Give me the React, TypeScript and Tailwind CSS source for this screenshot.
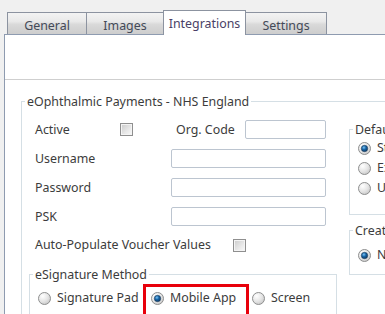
import React from "react";

function Radio({ checked = false }: { checked?: boolean }) {
  return (
    <svg width="13" height="13" viewBox="0 0 13 13" className="shrink-0">
      <defs>
        <radialGradient id="rgOuter" cx="35%" cy="30%" r="75%">
          <stop offset="0%" stopColor="#ffffff" />
          <stop offset="60%" stopColor="#e4e4e4" />
          <stop offset="100%" stopColor="#c8c8c8" />
        </radialGradient>
        <radialGradient id="rgDot" cx="40%" cy="35%" r="70%">
          <stop offset="0%" stopColor="#7cc4f5" />
          <stop offset="45%" stopColor="#1766a8" />
          <stop offset="100%" stopColor="#0a3560" />
        </radialGradient>
      </defs>
      <circle cx="6.5" cy="6.5" r="6" fill="url(#rgOuter)" stroke="#8e8f8f" strokeWidth="1" />
      {checked && <circle cx="6.5" cy="6.5" r="3.2" fill="url(#rgDot)" stroke="#233f5c" strokeWidth="0.6" />}
    </svg>
  );
}

function Checkbox() {
  return (
    <div className="w-[13px] h-[13px] border border-[#8f8f8f] bg-[#f4f4f4] p-[1px] shrink-0">
      <div className="w-full h-full bg-[linear-gradient(135deg,#cfcfcf,#e8e8e8_60%,#f6f6f6)]" />
    </div>
  );
}

function Input({ w }: { w: string }) {
  return <div className={`${w} h-[19px] border border-[#bcc5d0] rounded-[2px] bg-white shrink-0`} />;
}

function Tab({ label, w, selected = false, first = false }: { label: string; w: string; selected?: boolean; first?: boolean }) {
  if (selected) {
    return (
      <div className={`${w} h-[25px] -ml-px relative z-20 bg-white border-l border-t border-r border-[#8c93a0] flex items-start justify-center pt-[5px] text-[#4a3f66] leading-[16px]`}>
        {label}
      </div>
    );
  }
  return (
    <div
      className={`${w} h-[22px] mb-px ${first ? "" : "-ml-px"} relative z-10 border-l border-t border-r border-[#8c93a0] bg-[linear-gradient(#f3f3f3,#e9e9e9_40%,#d9d9d9_55%,#cdcdcd)] flex items-start justify-center pt-[5px] text-[#444a58] leading-[16px]`}
    >
      {label}
    </div>
  );
}

export default function App() {
  return (
    <div className="w-[385px] h-[314px] overflow-hidden bg-[#f0f0f0] font-['Noto_Sans',sans-serif] text-[12.4px] text-[#3c3c3c]">
      {/* Tabs */}
      <div className="flex items-end h-[25px] mt-[10px] ml-[7px] -mb-px relative z-10">
        <Tab label="General" w="w-[80px]" first />
        <Tab label="Images" w="w-[78px]" />
        <Tab label="Integrations" w="w-[83px]" selected />
        <Tab label="Settings" w="w-[82px]" />
      </div>

      {/* Panel */}
      <div className="ml-[4px] h-[300px] border-l border-t border-[#8e9bb0] bg-white">
        <div className="h-[45px] border-b border-[#cfcfcf]" />

        <fieldset className="mt-[13px] ml-[16px] w-[420px] border border-[#d5dfe5]">
          <legend className="ml-[3px] px-[2px] leading-[17px]">eOphthalmic Payments - NHS England</legend>

          <div className="flex pt-[5px]">
            {/* Left column */}
            <div className="w-[315px] shrink-0">
              <div className="flex items-center h-[29px] pl-[13px]">
                <span className="w-[85px] shrink-0 pt-[2px]">Active</span>
                <Checkbox />
                <span className="ml-[43px] w-[69px] shrink-0 pt-[2px]">Org. Code</span>
                <Input w="w-[81px]" />
              </div>
              <div className="flex items-center h-[29px] pl-[13px]">
                <span className="w-[136px] shrink-0 pt-[2px]">Username</span>
                <Input w="w-[155px]" />
              </div>
              <div className="flex items-center h-[29px] pl-[13px]">
                <span className="w-[136px] shrink-0 pt-[2px]">Password</span>
                <Input w="w-[155px]" />
              </div>
              <div className="flex items-center h-[29px] pl-[13px]">
                <span className="w-[136px] shrink-0 pt-[2px]">PSK</span>
                <Input w="w-[155px]" />
              </div>
              <div className="flex items-center h-[29px] pl-[13px]">
                <span className="w-[198px] shrink-0 whitespace-nowrap">Auto-Populate Voucher Values</span>
                <Checkbox />
              </div>

              <fieldset className="mt-[6px] ml-[7px] w-[308px] border border-[#d5dfe5]">
                <legend className="ml-[3px] px-[2px] leading-[17px]">eSignature Method</legend>
                <div className="flex items-start pl-[8px] pt-px">
                  <div className="w-[105px] mt-[3px] h-[22px] flex items-center gap-[6px] shrink-0 whitespace-nowrap">
                    <Radio />
                    <span>Signature Pad</span>
                  </div>
                  <div className="w-[106px] h-[40px] border-[3px] border-[#e8000b] shrink-0">
                    <div className="h-[22px] flex items-center gap-[6px] pl-[5px] whitespace-nowrap">
                      <Radio checked />
                      <span>Mobile App</span>
                    </div>
                  </div>
                  <div className="ml-[3px] mt-[3px] h-[22px] flex items-center gap-[6px] whitespace-nowrap">
                    <Radio />
                    <span>Screen</span>
                  </div>
                </div>
              </fieldset>
            </div>

            {/* Right column */}
            <div className="ml-[12px] shrink-0">
              <fieldset className="mt-[6px] w-[120px] border border-[#d5dfe5] pb-[16px]">
                <legend className="ml-[3px] px-[2px] leading-[17px] whitespace-nowrap">Default Screen</legend>
                <div className="pl-[8px]">
                  <div className="h-[20px] flex items-center gap-[6px] whitespace-nowrap">
                    <Radio checked />
                    <span>Standard</span>
                  </div>
                  <div className="h-[20px] flex items-center gap-[6px] whitespace-nowrap">
                    <Radio />
                    <span>Express</span>
                  </div>
                  <div className="h-[20px] flex items-center gap-[6px] whitespace-nowrap">
                    <Radio />
                    <span>Unknown</span>
                  </div>
                </div>
              </fieldset>
              <fieldset className="mt-[7px] w-[120px] border border-[#d5dfe5] pb-[9px]">
                <legend className="ml-[3px] px-[2px] leading-[17px] whitespace-nowrap">Create Voucher</legend>
                <div className="pl-[8px] mt-[6px]">
                  <div className="h-[20px] flex items-center gap-[6px] whitespace-nowrap">
                    <Radio checked />
                    <span>New</span>
                  </div>
                </div>
              </fieldset>
            </div>
          </div>
        </fieldset>
      </div>
    </div>
  );
}
